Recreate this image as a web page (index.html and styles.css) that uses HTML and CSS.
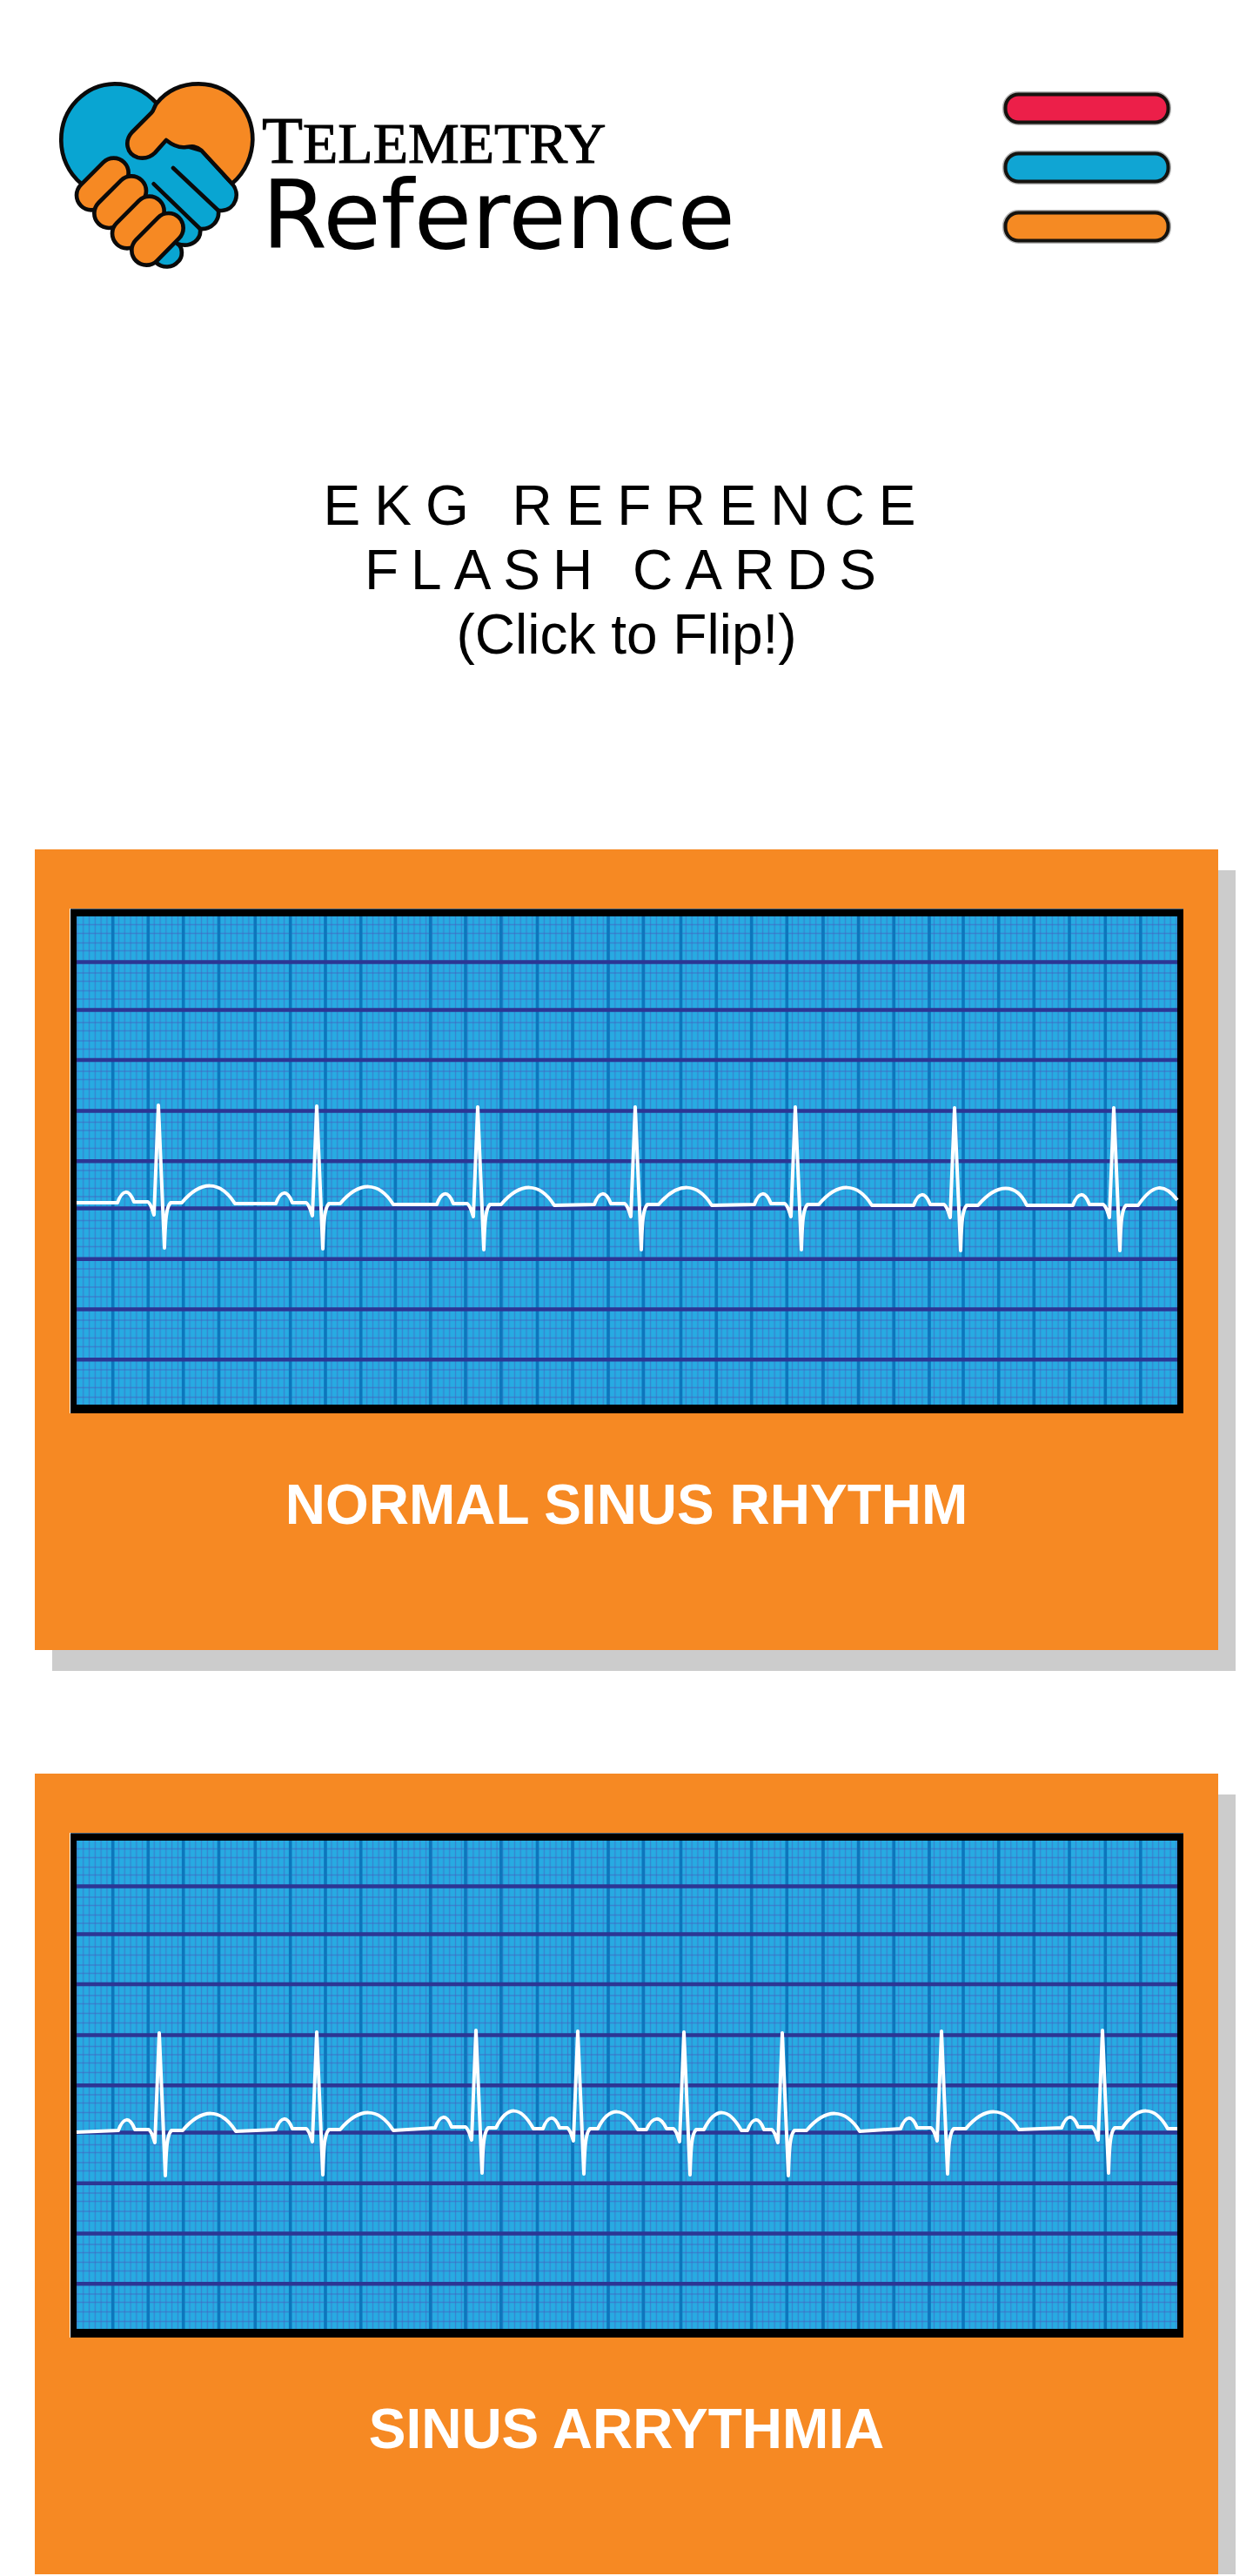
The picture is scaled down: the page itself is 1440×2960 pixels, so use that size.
FILE: index.html
```html
<!DOCTYPE html>
<html lang="en">
<head>
  <meta charset="utf-8">
  <meta name="viewport" content="width=device-width, initial-scale=1">
  <title>Telemetry Reference</title>
  <link rel="stylesheet" href="styles.css">
</head>
<body>
  <header class="header">
    <a class="logo" href="#">
      <svg class="logo-mark" viewBox="54 38 675 648" aria-hidden="true">
        <g stroke="#0a0a0a" stroke-width="14" stroke-linejoin="round" stroke-linecap="round">
          <path fill="#09a5d2" d="M130 392A187 192 0 0 1 61 240A187 192 0 0 1 245 48C305 48 353 74 390 115L423 242L545 278L650 392C680 425 663 482 615 485L603 485C607 520 580 551 540 548C545 585 510 614 462 600C482 612 480 645 465 660C445 684 410 684 388 664L250 480Z"/>
          <path fill="#f68923" d="M650 392C700 350 720 290 721 240A187 192 0 0 0 535 48C475 48 425 72 390 115C380 129 382 138 372 148L305 215C278 245 286 290 325 302C350 307 368 302 384 286L423 242C448 262 472 269 492 266C512 263 526 261 545 278Z"/>
          <path fill="none" d="M447 338L603 485M380 393L540 548"/>
        </g>
        <g fill="none" stroke-linecap="round">
          <path stroke="#0a0a0a" stroke-width="116" d="M242 355L165 432"/>
          <path stroke="#f68923" stroke-width="88" d="M242 355L165 432"/>
          <path stroke="#0a0a0a" stroke-width="116" d="M303 417L226 494"/>
          <path stroke="#f68923" stroke-width="88" d="M303 417L226 494"/>
          <path stroke="#0a0a0a" stroke-width="116" d="M365 487L288 564"/>
          <path stroke="#f68923" stroke-width="88" d="M365 487L288 564"/>
          <path stroke="#0a0a0a" stroke-width="116" d="M431 545L355 622"/>
          <path stroke="#f68923" stroke-width="88" d="M431 545L355 622"/>
        </g>
      </svg>
      <span class="logo-text">
        <span class="logo-telemetry">T<span class="logo-small">ELEMETRY</span></span>
        <span class="logo-reference">Reference</span>
      </span>
    </a>
    <button class="menu" type="button" aria-label="Menu">
      <svg class="menu-icon" viewBox="0 0 194 177" aria-hidden="true">
        <g fill="none" stroke="#000" stroke-opacity=".3" stroke-width="7">
          <rect x="3.500" y="4.500" width="187" height="32" rx="15"/>
          <rect x="3.500" y="72.500" width="187" height="32" rx="15"/>
          <rect x="3.500" y="140.500" width="187" height="32" rx="15"/>
        </g>
        <g stroke="#15130f" stroke-width="4">
          <rect fill="#ec1f49" x="3.500" y="4.500" width="187" height="32" rx="15"/>
          <rect fill="#10a5d3" x="3.500" y="72.500" width="187" height="32" rx="15"/>
          <rect fill="#f58a23" x="3.500" y="140.500" width="187" height="32" rx="15"/>
        </g>
      </svg>
    </button>
  </header>

  <main class="main">
    <h1 class="title"><span class="title-wide">EKG REFRENCE</span><br><span class="title-medium">FLASH CARDS</span><br>(Click to Flip!)</h1>

    <div class="cards">
      <button class="card" type="button">
        <svg class="strip" viewBox="0 0 1280 580" aria-hidden="true">
          <defs>
            <pattern id="minor" x="46.300" y="0" width="6.790" height="580" patternUnits="userSpaceOnUse">
              <path d="M3.400 0V580" stroke="#4560bd" stroke-opacity=".5" stroke-width="1.400"/>
            </pattern>
            <g id="paper">
              <rect width="1280" height="580" fill="#000"/>
              <rect width="1" height="580" fill="#fff"/>
              <rect x="1" width="1279" height="1" fill="#46627a"/>
              <rect x="8" y="9" width="1265" height="561" fill="#27abe2"/>
              <rect x="8" y="9" width="1265" height="561" fill="url(#minor)"/>
              <path stroke="#4560bd" stroke-opacity=".5" stroke-width="1.400" d="M8 18.500H1273M8 28.500H1273M8 39.500H1273M8 48.500H1273M8 74H1273M8 83.500H1273M8 94.500H1273M8 104H1273M8 131H1273M8 140.500H1273M8 152H1273M8 161.500H1273M8 187H1273M8 196.500H1273M8 207.500H1273M8 218.500H1273M8 245.500H1273M8 255H1273M8 264.500H1273M8 275.500H1273M8 301H1273M8 310.500H1273M8 321.500H1273M8 331H1273M8 358.500H1273M8 367.500H1273M8 379H1273M8 388.500H1273M8 414H1273M8 423.500H1273M8 435H1273M8 446H1273M8 473H1273M8 482.500H1273M8 493.500H1273M8 503.500H1273M8 530H1273M8 539.500H1273M8 550.500H1273M8 561.500H1273"/>
              <path stroke="#0d76bc" stroke-width="3.600" d="M49.700 9V570M90.300 9V570M130.700 9V570M171.500 9V570M213.300 9V570M253.700 9V570M294 9V570M334.700 9V570M374.300 9V570M414.700 9V570M455 9V570M495.800 9V570M537.500 9V570M578 9V570M619 9V570M659.300 9V570M702.500 9V570M743.300 9V570M783.700 9V570M824.300 9V570M866 9V570M906.700 9V570M947.300 9V570M988 9V570M1027 9V570M1067.700 9V570M1108.300 9V570M1149 9V570M1190.300 9V570M1230.800 9V570"/>
              <path stroke="#2c3694" stroke-width="4.400" d="M8 61.500H1273M8 116.500H1273M8 174H1273M8 232.500H1273M8 290.300H1273M8 344.500H1273M8 402.700H1273M8 460.500H1273M8 518.300H1273"/>
            </g>
          </defs>
          <use href="#paper"/>
          <path class="trace" d="M8 338L55 338
            c6-16 13-16 19-1h16c4 3 5 10 7 15l5-126l7 164c1-32 2-47 7-52h13c22-26 44-26 61 1
            L237 339c6-16 13-16 19-1h16c4 3 5 10 7 15l5-126l7 164c1-32 2-47 7-52h13c22-26 44-26 61 1
            L422 340c6-16 13-16 19-1h16c4 3 5 10 7 15l5-126l7 164c1-32 2-47 7-52h13c22-26 44-26 61 1
            L603 340c6-16 13-16 19-1h16c4 3 5 10 7 15l5-126l7 164c1-32 2-47 7-52h13c22-26 44-26 61 1
            L787 340c6-16 13-16 19-1h16c4 3 5 10 7 15l5-126l7 164c1-32 2-47 7-52h13c22-26 44-26 61 1
            L970 341c6-16 13-16 19-1h16c4 3 5 10 7 15l5-126l7 164c1-32 2-47 7-52h13c22-26 44-26 56 0
            L1153 341c6-16 13-16 19-1h16c4 3 5 10 7 15l5-126l7 164c1-32 2-47 7-52h14c17-25 30-26 45-6"/>
        </svg>
        <span class="card-title">NORMAL SINUS RHYTHM</span>
      </button>

      <button class="card" type="button">
        <svg class="strip" viewBox="0 0 1280 580" aria-hidden="true">
          <use href="#paper"/>
          <path class="trace" d="M8 344L56 342
            c6-16 13-16 19-1h16c4 3 5 10 7 15l5-126l7 164c1-32 2-47 7-52h13c22-26 44-26 61 1
            L237 341c6-16 13-16 19-1h16c4 3 5 10 7 15l5-126l7 164c1-32 2-47 7-52h13c22-26 44-26 61 1
            L420 339c6-16 13-16 19-1h16c4 3 5 10 7 15l5-126l7 164c1-32 2-47 7-52h9c13-26 28-26 43 1
            h11c6-16 13-16 19-1h9c4 3 5 10 7 15l5-126l7 164c1-32 2-47 7-52h9c13-26 30-26 46 1
            h10c7-16 16-16 23-1h8c4 3 5 10 7 15l5-126l7 164c1-32 2-47 7-52h9c13-26 28-26 43 1
            h7c6-16 13-16 19-1h9c4 3 5 10 7 15l5-126l7 164c1-32 2-47 7-52h14c22-26 44-26 61 1
            L955 340c6-16 13-16 19-1h16c4 3 5 10 7 15l5-126l7 164c1-32 2-47 7-52h14c22-26 44-26 61 1
            L1140 339c6-16 13-16 19-1h16c4 3 5 10 7 15l5-126l7 164c1-32 2-47 7-52h9c18-26 37-26 52 1H1273"/>
        </svg>
        <span class="card-title">SINUS ARRYTHMIA</span>
      </button>
    </div>
  </main>
</body>
</html>
```

FILE: styles.css
```css
* {
  box-sizing: border-box;
}

body {
  margin: 0;
  background: #fff;
  color: #000;
  font-family: "Liberation Sans", Arial, Helvetica, sans-serif;
}

.header {
  display: flex;
  align-items: flex-start;
  justify-content: space-between;
  padding: 93px 94px 0 68px;
}

.logo {
  display: flex;
  align-items: flex-start;
  gap: 8px;
  color: #000;
  text-decoration: none;
}

.logo-mark {
  display: block;
  width: 225px;
  height: 216px;
}

.logo-text {
  display: flex;
  flex-direction: column;
  padding-top: 19px;
}

.logo-telemetry {
  font-family: "Liberation Serif", "Times New Roman", serif;
  font-size: 77px;
  line-height: 98px;
  -webkit-text-stroke: 1px #000;
}

.logo-small {
  font-size: 66px;
  line-height: 1;
}

.logo-reference {
  font-family: "DejaVu Sans", sans-serif;
  font-size: 108px;
  line-height: 76px;
}

.menu {
  padding: 11px 0;
  border: 0;
  background: none;
  cursor: pointer;
}

.menu-icon {
  display: block;
  width: 194px;
  height: 177px;
}

.title {
  margin: 235px 40px 210px;
  font-size: 64px;
  font-weight: 400;
  line-height: 74px;
  text-align: center;
}

.title-wide {
  letter-spacing: 16px;
}

.title-medium {
  letter-spacing: 14px;
}

.cards {
  display: flex;
  flex-direction: column;
  gap: 142px;
  padding: 0 40px;
}

.card {
  display: flex;
  flex-direction: column;
  align-items: center;
  gap: 68px;
  padding: 68px 40px 130px;
  border: 0;
  background: #f68923;
  box-shadow: 20px 24px 0 #ccc;
  color: #fff;
  font-family: inherit;
  font-size: 64px;
  font-weight: 700;
  line-height: 74px;
  cursor: pointer;
}

.strip {
  display: block;
  width: 100%;
  height: auto;
}

.trace {
  fill: none;
  stroke: #fff;
  stroke-width: 4px;
  stroke-linejoin: round;
}
```
